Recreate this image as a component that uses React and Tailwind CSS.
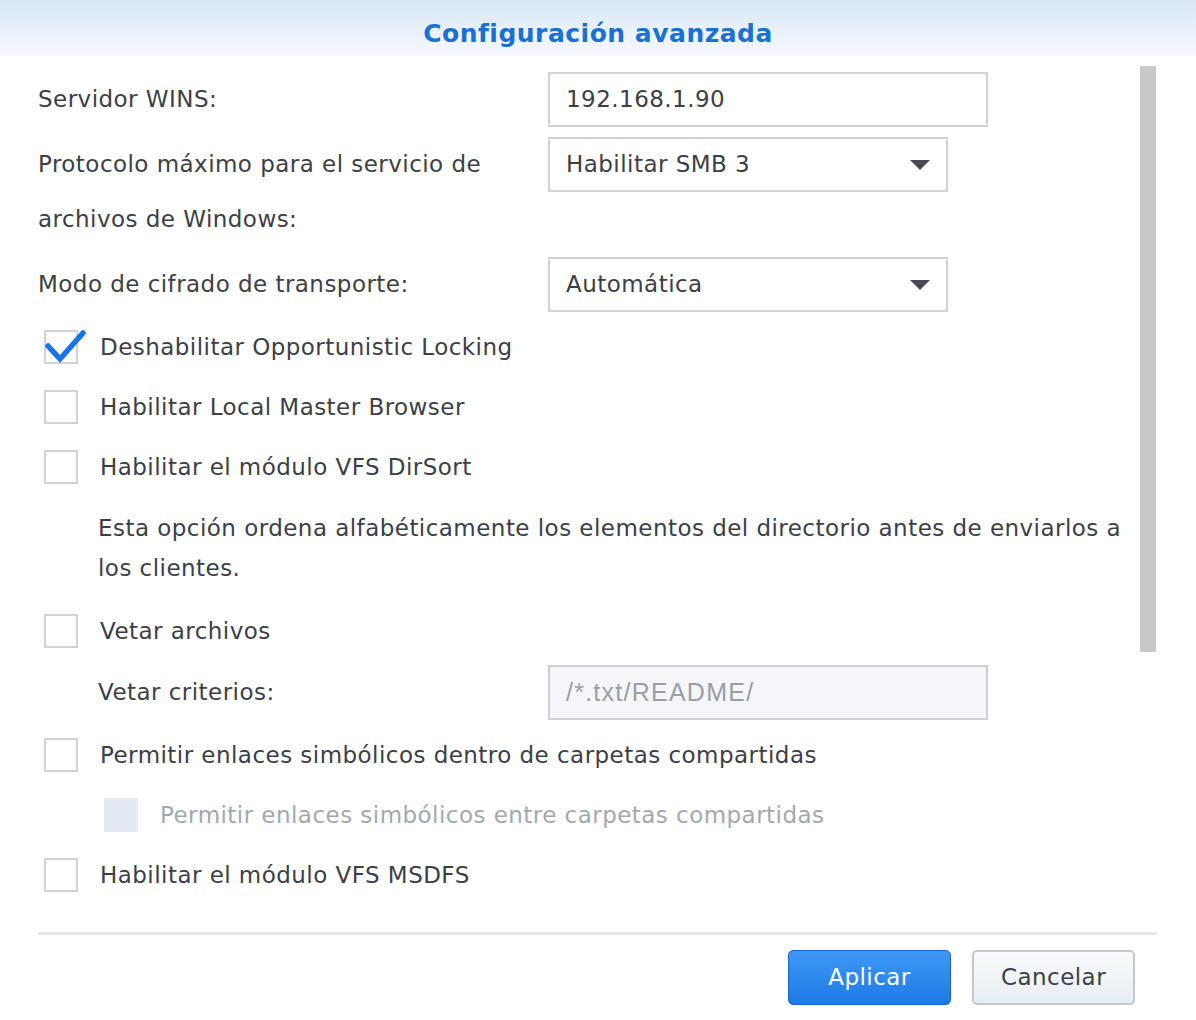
import React from "react";

const font = { fontFamily: '"DejaVu Sans", Verdana, sans-serif' };

const Checkbox = ({ checked, disabled }) => (
  <div
    className={`relative w-[34px] h-[34px] shrink-0 border-2 ${
      disabled ? "bg-[#e4eaf3] border-[#e4eaf3]" : "bg-white border-[#d2d2d2]"
    }`}
  >
    {checked && (
      <svg width="44" height="36" viewBox="0 0 44 36" className="absolute -left-[2px] -top-[2px] overflow-visible">
        <path d="M4 16 L16 29 L39 3" fill="none" stroke="#1a73e8" strokeWidth="5.5" strokeLinejoin="miter" strokeLinecap="round" />
      </svg>
    )}
  </div>
);

const CheckRow = ({ label, checked, disabled, indent }) => (
  <div className={`flex items-center h-[60px] ${indent ? "pl-[66px]" : "pl-[6px]"}`}>
    <Checkbox checked={checked} disabled={disabled} />
    <span className={`ml-[22px] ${disabled ? "text-[#a3a8ae]" : "text-[#3c4046]"}`}>{label}</span>
  </div>
);

const Select = ({ value }) => (
  <div className="w-[400px] h-[55px] border-2 border-[#d2d2d2] bg-white flex items-center justify-between pl-[16px] pr-[16px]">
    <span>{value}</span>
    <svg width="20" height="10" viewBox="0 0 20 10">
      <path d="M0 0 L20 0 L10 10 Z" fill="#454a55" />
    </svg>
  </div>
);

export default function App() {
  return (
    <div className="w-[1196px] h-[1020px] bg-white text-[23px] text-[#3c4046] tracking-[0.02em] overflow-hidden" style={font}>
      <div className="h-[56px] bg-gradient-to-b from-[#d8e7f8] to-[#f6f9fd] flex items-center justify-center pt-[12px]">
        <h1 className="text-[25px] font-bold text-[#1b6fd5] tracking-[0.02em]">Configuración avanzada</h1>
      </div>

      <div className="relative h-[879px]">
        <div className="absolute right-[40px] top-[10px] w-[16px] h-[586px] bg-[#c9c9c9]" />

        <div className="pl-[38px] pr-[66px] pt-[16px]">
          <div className="flex items-center">
            <div className="w-[510px]">Servidor WINS:</div>
            <div className="w-[440px] h-[55px] border-2 border-[#d2d2d2] flex items-center pl-[16px]">192.168.1.90</div>
          </div>

          <div className="flex items-start mt-[10px]">
            <div className="w-[510px] leading-[55px]">
              Protocolo máximo para el servicio de
              <br />
              archivos de Windows:
            </div>
            <Select value="Habilitar SMB 3" />
          </div>

          <div className="flex items-center mt-[10px]">
            <div className="w-[510px]">Modo de cifrado de transporte:</div>
            <Select value="Automática" />
          </div>

          <div className="mt-[5px]">
            <CheckRow label="Deshabilitar Opportunistic Locking" checked />
            <CheckRow label="Habilitar Local Master Browser" />
            <CheckRow label="Habilitar el módulo VFS DirSort" />
          </div>

          <p className="pl-[60px] mt-[11px] leading-[40px]">
            Esta opción ordena alfabéticamente los elementos del directorio antes de enviarlos a los clientes.
          </p>

          <div className="mt-[13px]">
            <CheckRow label="Vetar archivos" />
          </div>

          <div className="flex items-center mt-[4px]">
            <div className="w-[510px] pl-[60px]">Vetar criterios:</div>
            <div
              className="w-[440px] h-[55px] border-2 border-[#cfd0d4] bg-[#f5f5fa] flex items-center pl-[16px] text-[25px] text-[#9a9ea5] tracking-[0.05em]"
              style={{ fontFamily: '"Liberation Sans", Arial, sans-serif' }}
            >
              /*.txt/README/
            </div>
          </div>

          <div className="mt-[5px]">
            <CheckRow label="Permitir enlaces simbólicos dentro de carpetas compartidas" />
            <CheckRow label="Permitir enlaces simbólicos entre carpetas compartidas" disabled indent />
            <CheckRow label="Habilitar el módulo VFS MSDFS" />
          </div>
        </div>

        <div className="absolute left-[38px] right-[39px] bottom-[0px] h-[3px] bg-[#e6e6e6]" />
      </div>

      <div className="flex justify-end gap-[21px] pr-[61px] pt-[15px]">
        <button className="w-[163px] h-[55px] rounded-[5px] border border-[#1866cc] bg-gradient-to-b from-[#3f98f6] to-[#1c7ae6] text-white">
          Aplicar
        </button>
        <button className="w-[163px] h-[55px] rounded-[5px] border-2 border-[#c3c8cf] bg-gradient-to-b from-[#f8fafc] to-[#e9eef4] text-[#3c4046]">
          Cancelar
        </button>
      </div>
    </div>
  );
}
